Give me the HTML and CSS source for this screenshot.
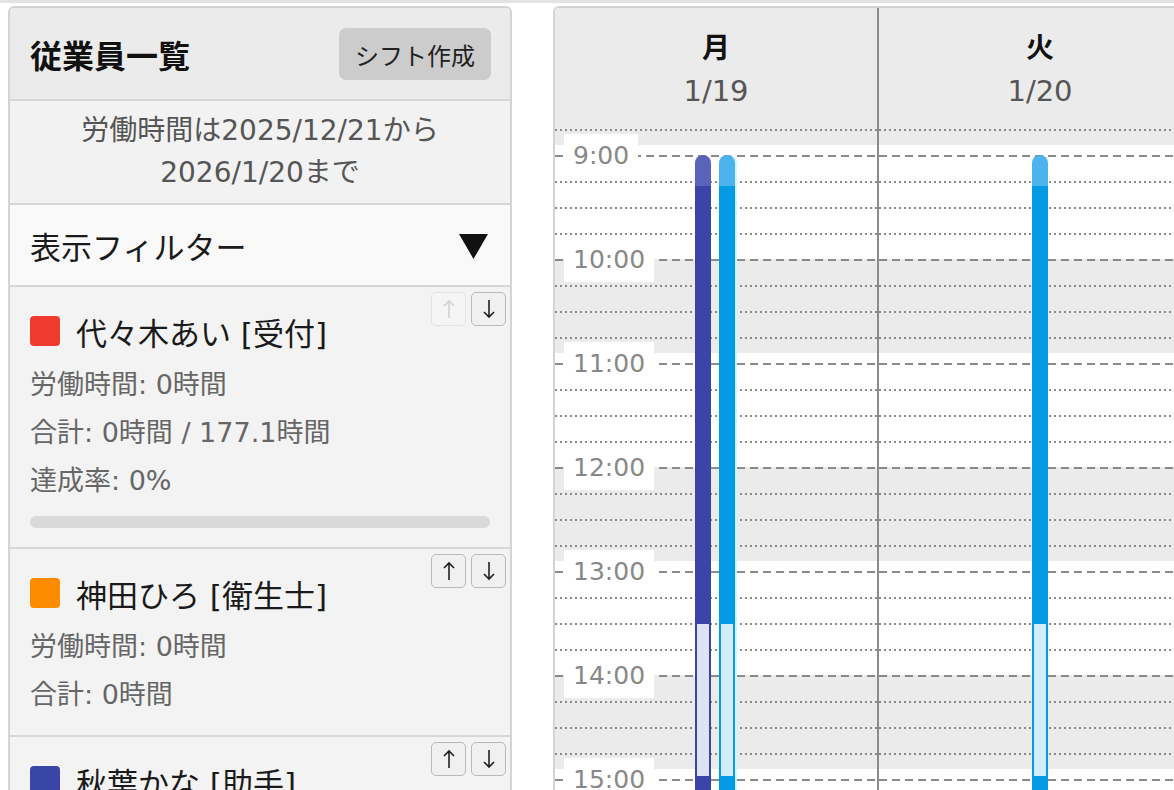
FILE: index.html
```html
<!DOCTYPE html>
<html lang="ja">
<head>
<meta charset="utf-8">
<title>シフト管理</title>
<link rel="stylesheet" href="styles.css">
</head>
<body>
<div class="topline"></div>
<div class="page">
  <aside class="panel">
    <div class="panel-head">
      <h2 class="panel-title">従業員一覧</h2>
      <button class="btn-create">シフト作成</button>
    </div>
    <div class="period">労働時間は2025/12/21から<br>2026/1/20まで</div>
    <div class="filter">
      <span>表示フィルター</span>
      <svg class="filter-caret" width="29" height="25" viewBox="0 0 29 25"><polygon points="0,0 29,0 14.5,25" fill="#111"/></svg>
    </div>

    <div class="emp">
      <div class="order">
        <button class="order-btn is-disabled"><svg width="20" height="22" viewBox="0 0 20 22"><path d="M10 3V20M5 8L10 3L15 8" fill="none" stroke="currentColor" stroke-width="1.6"/></svg></button>
        <button class="order-btn"><svg width="20" height="22" viewBox="0 0 20 22"><path d="M10 2V19M5 14L10 19L15 14" fill="none" stroke="currentColor" stroke-width="1.6"/></svg></button>
      </div>
      <div class="emp-name"><span class="swatch swatch-red"></span>代々木あい [受付]</div>
      <div class="emp-stats">
        <div>労働時間: 0時間</div>
        <div>合計: 0時間 / 177.1時間</div>
        <div>達成率: 0%</div>
      </div>
      <div class="progress"><div class="progress-fill" style="width:0%"></div></div>
    </div>

    <div class="emp">
      <div class="order">
        <button class="order-btn"><svg width="20" height="22" viewBox="0 0 20 22"><path d="M10 3V20M5 8L10 3L15 8" fill="none" stroke="currentColor" stroke-width="1.6"/></svg></button>
        <button class="order-btn"><svg width="20" height="22" viewBox="0 0 20 22"><path d="M10 2V19M5 14L10 19L15 14" fill="none" stroke="currentColor" stroke-width="1.6"/></svg></button>
      </div>
      <div class="emp-name"><span class="swatch swatch-orange"></span>神田ひろ [衛生士]</div>
      <div class="emp-stats">
        <div>労働時間: 0時間</div>
        <div>合計: 0時間</div>
      </div>
    </div>

    <div class="emp">
      <div class="order">
        <button class="order-btn"><svg width="20" height="22" viewBox="0 0 20 22"><path d="M10 3V20M5 8L10 3L15 8" fill="none" stroke="currentColor" stroke-width="1.6"/></svg></button>
        <button class="order-btn"><svg width="20" height="22" viewBox="0 0 20 22"><path d="M10 2V19M5 14L10 19L15 14" fill="none" stroke="currentColor" stroke-width="1.6"/></svg></button>
      </div>
      <div class="emp-name"><span class="swatch swatch-indigo"></span>秋葉かな [助手]</div>
      <div class="emp-stats">
        <div>労働時間: 0時間</div>
        <div>合計: 0時間</div>
      </div>
    </div>
  </aside>

  <section class="calendar">
    <div class="day">
      <div class="day-head">
        <div class="day-name">月</div>
        <div class="day-date">1/19</div>
      </div>
      <div class="day-body">
        <div class="slot"></div>
        <div class="slot hour"><span class="time">9:00</span></div>
        <div class="slot"></div><div class="slot"></div><div class="slot"></div>
        <div class="slot hour"><span class="time">10:00</span></div>
        <div class="slot"></div><div class="slot"></div><div class="slot"></div>
        <div class="slot hour"><span class="time">11:00</span></div>
        <div class="slot"></div><div class="slot"></div><div class="slot"></div>
        <div class="slot hour"><span class="time">12:00</span></div>
        <div class="slot"></div><div class="slot"></div><div class="slot"></div>
        <div class="slot hour"><span class="time">13:00</span></div>
        <div class="slot"></div><div class="slot"></div><div class="slot"></div>
        <div class="slot hour"><span class="time">14:00</span></div>
        <div class="slot"></div><div class="slot"></div><div class="slot"></div>
        <div class="slot hour"><span class="time">15:00</span></div>
        <div class="slot"></div><div class="slot"></div>

        <div class="bar bar-indigo" style="left:140px;top:28px">
          <div class="bar-head"></div>
          <div class="bar-run" style="height:436px"></div>
          <div class="bar-break" style="height:156px"></div>
          <div class="bar-run" style="height:200px"></div>
        </div>
        <div class="bar bar-blue bar-glow" style="left:164px;top:28px">
          <div class="bar-head"></div>
          <div class="bar-run" style="height:436px"></div>
          <div class="bar-break" style="height:156px"></div>
          <div class="bar-run" style="height:200px"></div>
        </div>
      </div>
    </div>

    <div class="day">
      <div class="day-head">
        <div class="day-name">火</div>
        <div class="day-date">1/20</div>
      </div>
      <div class="day-body">
        <div class="slot"></div>
        <div class="slot hour"></div>
        <div class="slot"></div><div class="slot"></div><div class="slot"></div>
        <div class="slot hour"></div>
        <div class="slot"></div><div class="slot"></div><div class="slot"></div>
        <div class="slot hour"></div>
        <div class="slot"></div><div class="slot"></div><div class="slot"></div>
        <div class="slot hour"></div>
        <div class="slot"></div><div class="slot"></div><div class="slot"></div>
        <div class="slot hour"></div>
        <div class="slot"></div><div class="slot"></div><div class="slot"></div>
        <div class="slot hour"></div>
        <div class="slot"></div><div class="slot"></div><div class="slot"></div>
        <div class="slot hour"></div>
        <div class="slot"></div><div class="slot"></div>

        <div class="bar bar-blue" style="left:153px;top:28px">
          <div class="bar-head"></div>
          <div class="bar-run" style="height:436px"></div>
          <div class="bar-break" style="height:156px"></div>
          <div class="bar-run" style="height:200px"></div>
        </div>
      </div>
    </div>
  </section>
</div>
</body>
</html>
```

FILE: styles.css
```css
html, body {
  margin: 0;
  height: 790px;
  overflow: hidden;
  background: #ffffff;
}
body {
  font-family: "DejaVu Sans", "Noto Sans CJK JP", sans-serif;
  color: #222;
}
.topline {
  height: 3px;
  background: #e3e3e3;
}
.page {
  display: flex;
  align-items: flex-start;
  gap: 41px;
  padding: 3px 0 0 8px;
}

/* ---------- left panel ---------- */
.panel {
  flex: 0 0 504px;
  box-sizing: border-box;
  border: 2px solid #d4d4d4;
  border-bottom: none;
  border-radius: 6px 6px 0 0;
  background: #f3f3f3;
}
.panel-head {
  height: 93px;
  box-sizing: border-box;
  display: flex;
  align-items: center;
  justify-content: space-between;
  padding: 0 20px;
  background: #ebebeb;
  border-bottom: 2px solid #d6d6d6;
  border-radius: 5px 5px 0 0;
}
.panel-title {
  margin: 0;
  font-family: "Noto Sans CJK JP", sans-serif;
  font-size: 32px;
  font-weight: 700;
  color: #111;
  line-height: 1;
}
.btn-create {
  height: 52px;
  padding: 0 16px;
  border: none;
  border-radius: 7px;
  background: #cccccc;
  font-family: "Noto Sans CJK JP", sans-serif;
  font-size: 24px;
  color: #222;
  margin-top: 1px;
  margin-right: -1px;
}
.period {
  padding: 9px 10px;
  text-align: center;
  font-size: 28px;
  line-height: 42px;
  color: #555;
  background: #f2f2f2;
  border-bottom: 2px solid #d6d6d6;
}
.filter {
  height: 82px;
  box-sizing: border-box;
  display: flex;
  align-items: center;
  justify-content: space-between;
  padding: 0 22px 0 20px;
  font-family: "Noto Sans CJK JP", sans-serif;
  font-size: 31px;
  color: #1a1a1a;
  background: #f9f9f9;
  border-bottom: 2px solid #d6d6d6;
}
.filter-caret {
  display: block;
  margin-top: 2px;
}
.emp {
  position: relative;
  padding: 24px 20px 16px 20px;
  background: #f3f3f3;
  border-bottom: 2px solid #d6d6d6;
}
.order {
  position: absolute;
  top: 5px;
  right: 4px;
  display: flex;
  gap: 5px;
}
.order-btn {
  width: 35px;
  height: 34px;
  box-sizing: border-box;
  padding: 0;
  display: flex;
  align-items: center;
  justify-content: center;
  border: 1.5px solid #b9b9b9;
  border-radius: 5px;
  background: #f0f0f0;
  color: #222;
}
.order-btn.is-disabled {
  border-color: #e3e3e3;
  background: #f5f5f5;
  color: #d2d2d2;
}
.emp-name {
  display: flex;
  align-items: center;
  gap: 16px;
  height: 40px;
  font-size: 31px;
  color: #1a1a1a;
  white-space: nowrap;
}
.swatch {
  flex: 0 0 30px;
  width: 30px;
  height: 30px;
  border-radius: 4px;
}
.swatch-red { background: #ef3a2f; }
.swatch-orange { background: #ff8c00; }
.swatch-indigo { background: #3a45a8; }
.emp-stats {
  margin-top: 10px;
  font-size: 27px;
  line-height: 48px;
  color: #666;
}
.progress {
  height: 12px;
  margin: 11px 0 3px;
  border-radius: 6px;
  background: #d9d9d9;
  overflow: hidden;
}
.progress-fill {
  height: 100%;
  background: #4caf50;
}

/* ---------- calendar ---------- */
.calendar {
  flex: 0 0 auto;
  display: flex;
  border-top: 2px solid #d4d4d4;
  border-left: 2px solid #d4d4d4;
  border-radius: 6px 0 0 0;
  overflow: hidden;
}
.day {
  width: 322px;
  border-right: 2px solid #8c8c8c;
}
.day-head {
  height: 119px;
  box-sizing: border-box;
  padding-top: 16px;
  text-align: center;
  background: #ebebeb;
}
.day-name {
  font-family: "Noto Sans CJK JP", sans-serif;
  font-size: 28px;
  font-weight: 700;
  line-height: 44px;
  color: #111;
}
.day-date {
  font-size: 29px;
  line-height: 46px;
  color: #555;
}
.day-body {
  position: relative;
  height: 700px;
  padding-top: 2px;
  box-sizing: border-box;
  background: repeating-linear-gradient(to bottom,
      #ebebeb 0 18px, #ffffff 18px 132px, #ebebeb 132px 208px);
}
.slot {
  position: relative;
  height: 26px;
  background: repeating-linear-gradient(to right, #8a8a8a 0 2px, transparent 2px 5px) top left / 100% 2px no-repeat;
}
.slot.hour {
  background: repeating-linear-gradient(to right, #8a8a8a 0 8px, transparent 8px 13px) top left / 100% 2px no-repeat;
}
.time {
  position: absolute;
  left: 9px;
  top: -21px;
  height: 44px;
  padding: 0 9px;
  background: #ffffff;
  font-size: 25px;
  line-height: 44px;
  color: #888;
}

.bar {
  position: absolute;
  width: 16px;
  display: flex;
  flex-direction: column;
  border-radius: 8px 8px 0 0;
  overflow: hidden;
}
.bar-head { height: 31px; }
.bar-break { box-sizing: border-box; border: 2px solid; }
.bar-indigo .bar-head { background: #5b64ba; }
.bar-indigo .bar-run { background: #3a44a9; }
.bar-indigo .bar-break { border-color: #3a44a9; background: #dfe1f4; }
.bar-blue .bar-head { background: #4db3ef; }
.bar-blue .bar-run { background: #039be5; }
.bar-blue .bar-break { border-color: #039be5; background: #d4ecfa; }
.bar-glow { box-shadow: 2px 0 0 #d2f6ff; overflow: visible; }
.bar-glow .bar-head { border-radius: 8px 8px 0 0; }
```
